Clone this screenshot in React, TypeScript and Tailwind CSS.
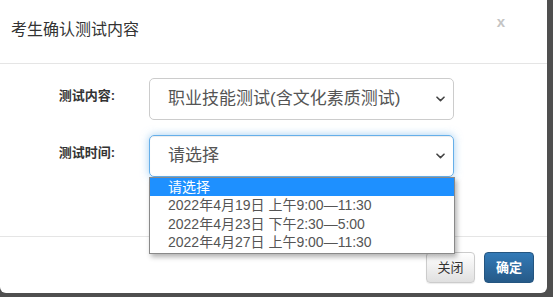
import React from "react";

const font = { fontFamily: '"Liberation Sans", "Noto Sans CJK SC", sans-serif' };

function Chevron() {
  return (
    <svg width="9" height="6" viewBox="0 0 9 6" className="shrink-0">
      <path d="M1 1.2 L4.5 4.6 L8 1.2" fill="none" stroke="#444" strokeWidth="1.6" strokeLinecap="round" strokeLinejoin="round" />
    </svg>
  );
}

export default function App() {
  const options = [
    "2022年4月19日 上午9:00—11:30",
    "2022年4月23日 下午2:30—5:00",
    "2022年4月27日 上午9:00—11:30",
  ];
  return (
    <div className="w-[553px] h-[297px] bg-[#4f4f4f] overflow-hidden" style={font}>
      <div className="w-[547px] h-[293px] bg-white rounded-b-[6px] flex flex-col">
        {/* header */}
        <div className="h-[64px] shrink-0 border-b border-[#e5e5e5] flex justify-between pl-[11px] pr-[42px]">
          <div className="text-[16px] text-[#333] pt-[19px] leading-[22px]">考生确认测试内容</div>
          <div className="text-[15px] font-bold text-[#c4c4c4] pt-[12px] leading-[20px]">x</div>
        </div>
        {/* body */}
        <div className="h-[172px] shrink-0 pt-[14px] flex flex-col gap-[15px]">
          <div className="flex items-start">
            <div className="w-[115px] text-right text-[13px] font-bold text-[#333] pt-[9px] leading-[18px]">测试内容:</div>
            <div className="ml-[34px] w-[305px] h-[42px] border border-[#ccc] rounded-[5px] flex items-center justify-between pl-[18px] pr-[8px] text-[17px] text-[#555]">
              <span>职业技能测试(含文化素质测试)</span>
              <Chevron />
            </div>
          </div>
          <div className="flex items-start">
            <div className="w-[115px] text-right text-[13px] font-bold text-[#333] pt-[9px] leading-[18px]">测试时间:</div>
            <div className="ml-[34px] relative">
              <div className="w-[305px] h-[42px] border border-[#66afe9] rounded-[5px] flex items-center justify-between pl-[18px] pr-[8px] text-[17px] text-[#555] shadow-[inset_0_1px_1px_rgba(0,0,0,0.075),0_0_8px_rgba(102,175,233,0.6)]">
                <span>请选择</span>
                <Chevron />
              </div>
              <div className="absolute left-0 top-[42px] w-[306px] bg-white border border-[#8a8a8a] shadow-[2px_3px_5px_rgba(0,0,0,0.3)] text-[14px] pb-[1px] z-10">
                <div className="h-[18px] leading-[18px] bg-[#1e90ff] text-white pl-[18px]">请选择</div>
                {options.map((o) => (
                  <div key={o} className="h-[18.5px] leading-[18.5px] text-[#555] pl-[18px]">{o}</div>
                ))}
              </div>
            </div>
          </div>
        </div>
        {/* footer */}
        <div className="flex-1 border-t border-[#e5e5e5] flex justify-end items-start pt-[15px] pr-[13px] gap-[9px]">
          <div className="w-[49px] h-[31px] rounded-[4px] border border-[#ccc] bg-gradient-to-b from-white to-[#e0e0e0] text-[13px] text-[#333] flex items-center justify-center shadow-[0_1px_1px_rgba(0,0,0,0.08)]">关闭</div>
          <div className="w-[50px] h-[31px] rounded-[4px] border border-[#245580] bg-gradient-to-b from-[#337ab7] to-[#265a88] text-[13px] text-white font-bold flex items-center justify-center">确定</div>
        </div>
      </div>
    </div>
  );
}
